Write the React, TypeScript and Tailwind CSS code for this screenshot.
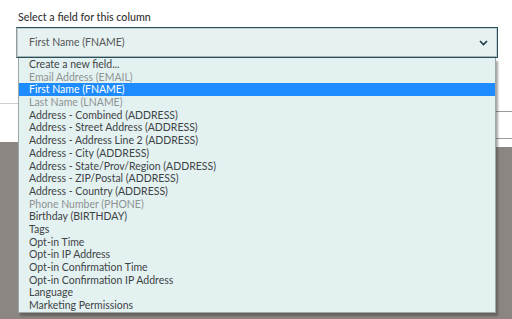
const options: { label: string; muted?: boolean; selected?: boolean }[] = [
  { label: "Create a new field..." },
  { label: "Email Address (EMAIL)", muted: true },
  { label: "First Name (FNAME)", selected: true },
  { label: "Last Name (LNAME)", muted: true },
  { label: "Address - Combined (ADDRESS)" },
  { label: "Address - Street Address (ADDRESS)" },
  { label: "Address - Address Line 2 (ADDRESS)" },
  { label: "Address - City (ADDRESS)" },
  { label: "Address - State/Prov/Region (ADDRESS)" },
  { label: "Address - ZIP/Postal (ADDRESS)" },
  { label: "Address - Country (ADDRESS)" },
  { label: "Phone Number (PHONE)", muted: true },
  { label: "Birthday (BIRTHDAY)" },
  { label: "Tags" },
  { label: "Opt-in Time" },
  { label: "Opt-in IP Address" },
  { label: "Opt-in Confirmation Time" },
  { label: "Opt-in Confirmation IP Address" },
  { label: "Language" },
  { label: "Marketing Permissions" },
];

export default function App() {
  return (
    <div className="relative h-[319px] w-[512px] overflow-hidden bg-[#8b8682] font-['Lato','Liberation_Sans',sans-serif]">
      {/* page behind the open menu */}
      <div className="h-[142px] bg-white">
        <div className="px-[16px] pt-[10px]">
          <div className="pl-[2px] text-[10.7px] font-medium leading-[14px] text-[#333]">
            Select a field for this column
          </div>
          <div className="mt-[3px] h-[31px] w-[482px] border border-[#24505e] border-l-[#8f9a9c]">
            <div className="flex h-full items-center justify-between border border-[#c3cdcd] border-b-[#a9b2b2] bg-[#e6f1f1] pl-[11px] pr-[8px]">
              <span className="text-[10.5px] text-[#555]">First Name (FNAME)</span>
              <svg width="9" height="6" viewBox="0 0 9 6" className="mt-[1px]">
                <path d="M1 1l3.5 3.5L8 1" fill="none" stroke="#1f3a45" strokeWidth="1.6" />
              </svg>
            </div>
          </div>
        </div>
        <div className="flex justify-between">
          <div className="h-[46px] w-[18px] border-b border-[#cfcfcf]" />
          <div className="flex w-[17px] flex-col bg-white">
            <div className="h-[54px] border-b border-[#9a9a9a]" />
            <div className="h-[27px] border-b border-[#9a9a9a]" />
            <div className="h-[8px]" />
          </div>
        </div>
      </div>

      {/* open option list */}
      <ul className="absolute left-[18px] top-[58px] w-[478px] border border-t-0 border-[#9ea8a9] bg-[#e4f1f1] shadow-[2px_3px_2px_rgba(60,55,50,0.45)]">
        {options.map((o) => (
          <li
            key={o.label}
            className={`h-[12.7px] whitespace-nowrap pl-[10px] text-[10.5px] leading-[12.7px] ${
              o.selected ? "bg-[#1e8cff] text-white" : o.muted ? "text-[#8e9393]" : "text-[#3d4446]"
            }`}
          >
            {o.label}
          </li>
        ))}
      </ul>
    </div>
  );
}
